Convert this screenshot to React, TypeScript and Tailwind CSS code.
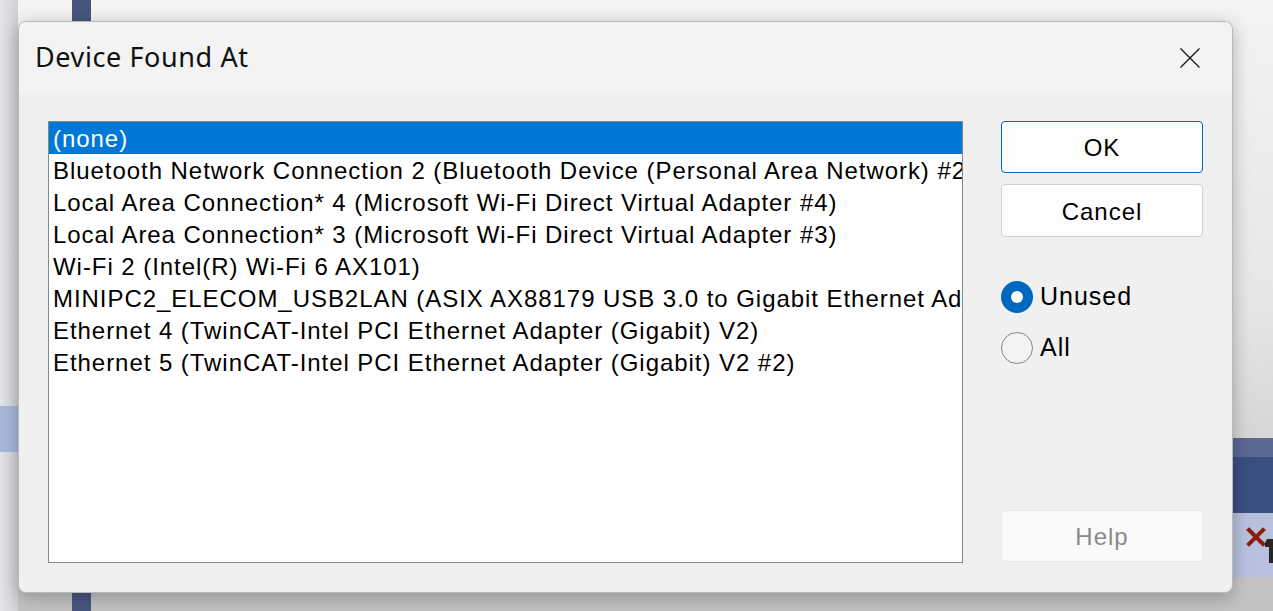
import React from "react";

const devices = [
  "(none)",
  "Bluetooth Network Connection 2 (Bluetooth Device (Personal Area Network) #2)",
  "Local Area Connection* 4 (Microsoft Wi-Fi Direct Virtual Adapter #4)",
  "Local Area Connection* 3 (Microsoft Wi-Fi Direct Virtual Adapter #3)",
  "Wi-Fi 2 (Intel(R) Wi-Fi 6 AX101)",
  "MINIPC2_ELECOM_USB2LAN (ASIX AX88179 USB 3.0 to Gigabit Ethernet Adapter)",
  "Ethernet 4 (TwinCAT-Intel PCI Ethernet Adapter (Gigabit) V2)",
  "Ethernet 5 (TwinCAT-Intel PCI Ethernet Adapter (Gigabit) V2 #2)",
];

const classicFont = { fontFamily: '"Liberation Sans", Arial, sans-serif' };
const uiFont = { fontFamily: '"Noto Sans", "Open Sans", sans-serif' };

const App: React.FC = () => {
  const selected = 0;
  const unused = true;

  return (
    <div className="relative h-[611px] w-[1273px] overflow-hidden bg-gradient-to-b from-[#f4f4f4] via-[#e6e6e6] to-[#c2c2c2]">
      {/* window content behind the dialog */}
      <div className="absolute left-0 top-0 h-full w-[18px] bg-gradient-to-r from-[#e4e5e9] to-[#cfd1d6]" />
      <div className="absolute left-[72px] top-0 h-full w-[19px] bg-[#4a5680]" />
      <div className="absolute left-0 top-[406px] h-[46px] w-[40px] bg-[#a9b8dc]" />
      <div className="absolute right-0 top-[438px] w-[40px]">
        <div className="h-[19px] bg-[#5b6892]" />
        <div className="h-[56px] bg-[#3a4e80]" />
        <div className="relative h-[64px] bg-[#b7c1dd]">
          <svg width="20" height="20" viewBox="0 0 20 20" className="absolute left-[13px] top-[14px]">
            <path d="M3 3 L17 17 M17 3 L3 17" stroke="#8e1b0b" strokeWidth="4" strokeLinecap="square" fill="none" />
          </svg>
          <svg width="10" height="24" viewBox="0 0 10 24" className="absolute left-[32px] top-[26px]">
            <path d="M2 0 H10 V24 H4 V8 H0 V4 Z" fill="#262626" />
          </svg>
        </div>
      </div>

      {/* dialog */}
      <div className="relative ml-[18px] mt-[21px] flex h-[572px] w-[1215px] flex-col overflow-hidden rounded-[8px] border border-[#b9b9b9] bg-[#f0f0f0] shadow-[0_4px_18px_rgba(0,0,0,0.28)]">
        <div className="flex h-[70px] shrink-0 items-center justify-between bg-[#f3f3f3] pl-[16px] pr-[31px]">
          <span className="pt-[1px] text-[27px] tracking-[0.6px] text-[#111]" style={uiFont}>
            Device Found At
          </span>
          <svg width="22" height="22" viewBox="0 0 22 22" className="mt-[1px]">
            <path d="M1.5 1.5 L20.5 20.5 M20.5 1.5 L1.5 20.5" stroke="#1b1b1b" strokeWidth="1.4" fill="none" />
          </svg>
        </div>

        <div className="flex flex-1 pl-[29px] pr-[29px] pt-[29px]">
          <div className="h-[442px] w-[915px] overflow-hidden border border-[#828790] bg-white" style={classicFont}>
            {devices.map((d, i) => (
              <div
                key={d}
                className={`h-[32px] overflow-hidden whitespace-nowrap pl-[4px] text-[24px] leading-[33px] tracking-[0.95px] ${
                  i === selected ? "bg-[#0078d7] text-white" : "text-black"
                }`}
              >
                {d}
              </div>
            ))}
          </div>

          <div className="ml-[38px] flex w-[202px] flex-col" style={classicFont}>
            <button className="h-[52px] rounded-[4px] border border-[#0067c0] bg-[#fdfdfd] pt-[2px] text-[24px] tracking-[1px] text-black">
              OK
            </button>
            <button className="mt-[11px] h-[53px] rounded-[4px] border border-[#d0d0d0] bg-[#fdfdfd] pt-[2px] text-[24px] tracking-[1px] text-black">
              Cancel
            </button>

            <div className="mt-[44px] flex flex-col gap-[19px]">
              <label className="flex h-[32px] items-center gap-[7px] text-[25px] tracking-[1px] text-black">
                <span className={`flex h-[32px] w-[32px] items-center justify-center rounded-full ${unused ? "bg-[#0067c0]" : "border border-[#858585]"}`}>
                  {unused && <span className="h-[12px] w-[12px] rounded-full bg-white" />}
                </span>
                Unused
              </label>
              <label className="flex h-[32px] items-center gap-[7px] text-[25px] tracking-[1px] text-black">
                <span className="h-[32px] w-[32px] rounded-full border-[1.5px] border-[#858585] bg-[#f3f3f3]" />
                All
              </label>
            </div>

            <button className="mt-auto mb-[30px] h-[52px] rounded-[4px] border border-[#ebebeb] bg-[#fafafa] pt-[2px] text-[24px] tracking-[1px] text-[#8a8a8a]">
              Help
            </button>
          </div>
        </div>
      </div>
    </div>
  );
};

export default App;
